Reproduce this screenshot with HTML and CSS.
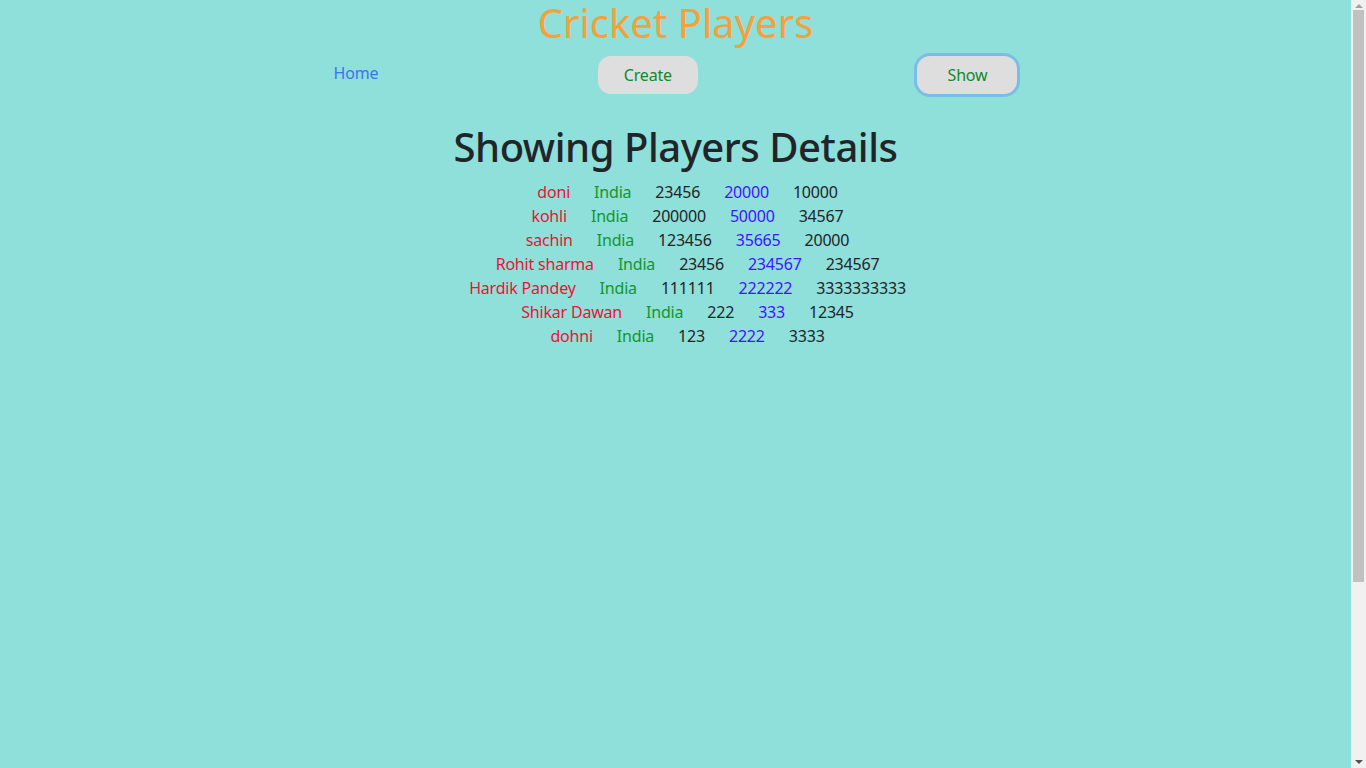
FILE: index.html
```html
<!DOCTYPE html>
<html>
<head>
<meta charset="utf-8">
<title>Cricket Players</title>
<link rel="stylesheet" href="styles.css">
</head>
<body>
<div class="page">
  <h1 class="title">Cricket Players</h1>
  <nav class="nav">
    <a class="home" href="#">Home</a>
    <button class="btn">Create</button>
    <button class="btn focused">Show</button>
  </nav>
  <h2 class="heading">Showing Players Details</h2>
  <div class="list">
    <div class="row"><span class="name">doni</span><span class="country">India</span><span class="num">23456</span><span class="blue">20000</span><span class="num">10000</span></div>
    <div class="row"><span class="name">kohli</span><span class="country">India</span><span class="num">200000</span><span class="blue">50000</span><span class="num">34567</span></div>
    <div class="row"><span class="name">sachin</span><span class="country">India</span><span class="num">123456</span><span class="blue">35665</span><span class="num">20000</span></div>
    <div class="row"><span class="name">Rohit sharma</span><span class="country">India</span><span class="num">23456</span><span class="blue">234567</span><span class="num">234567</span></div>
    <div class="row"><span class="name">Hardik Pandey</span><span class="country">India</span><span class="num">111111</span><span class="blue">222222</span><span class="num">3333333333</span></div>
    <div class="row"><span class="name">Shikar Dawan</span><span class="country">India</span><span class="num">222</span><span class="blue">333</span><span class="num">12345</span></div>
    <div class="row"><span class="name">dohni</span><span class="country">India</span><span class="num">123</span><span class="blue">2222</span><span class="num">3333</span></div>
  </div>
</div>
<div class="scrollbar">
  <div class="arrow up"></div>
  <div class="thumb"></div>
  <div class="arrow down"></div>
</div>
</body>
</html>
```
FILE: styles.css
```css
html, body {
  margin: 0;
  padding: 0;
}
body {
  background: #8fdfda;
  font-family: "Noto Sans", "Open Sans", sans-serif;
  color: #212529;
  overflow: hidden;
}
.page {
  width: calc(100% - 15px);
}
.title {
  margin: 0;
  padding: 0;
  text-align: center;
  font-size: 40px;
  font-weight: 400;
  line-height: 46px;
  color: #f5a03a;
}
.nav {
  width: 684px;
  margin: 10px auto 0;
  display: flex;
  justify-content: space-between;
  align-items: flex-start;
}
.home {
  color: #3a74f4;
  text-decoration: none;
  font-size: 16px;
  line-height: 24px;
  margin-top: 5px;
  letter-spacing: -0.2px;
}
.btn {
  width: 100px;
  height: 38px;
  border: none;
  border-radius: 13px;
  background: #dedede;
  color: #0e8a2a;
  font-family: inherit;
  font-size: 16px;
  letter-spacing: -0.2px;
  padding: 0;
}
.btn.focused {
  box-shadow: 0 0 0 3px #7cbde8;
}
.heading {
  margin: 29px 0 0;
  text-align: center;
  font-size: 40px;
  font-weight: 500;
  line-height: 48px;
  letter-spacing: -0.45px;
  color: #212529;
}
.list {
  margin-top: 9px;
}
.row {
  text-align: center;
  font-size: 16px;
  line-height: 24px;
  letter-spacing: -0.2px;
}
.row span {
  margin-left: 24px;
}
.name { color: #ec1235; }
.country { color: #14962d; }
.num { color: #212529; }
.blue { color: #4412ff; }

.scrollbar {
  position: fixed;
  top: 0;
  right: 0;
  width: 15px;
  height: 100vh;
  background: #f1f1f1;
  display: flex;
  flex-direction: column;
  align-items: center;
}
.arrow {
  width: 0;
  height: 0;
  border-left: 4px solid transparent;
  border-right: 4px solid transparent;
}
.arrow.up {
  margin-top: 4px;
  border-bottom: 4px solid #a3a3a3;
}
.arrow.down {
  margin-top: auto;
  margin-bottom: 4px;
  border-top: 4px solid #505050;
}
.thumb {
  margin-top: 2px;
  width: 11px;
  height: 572px;
  background: #c1c1c1;
}
```
